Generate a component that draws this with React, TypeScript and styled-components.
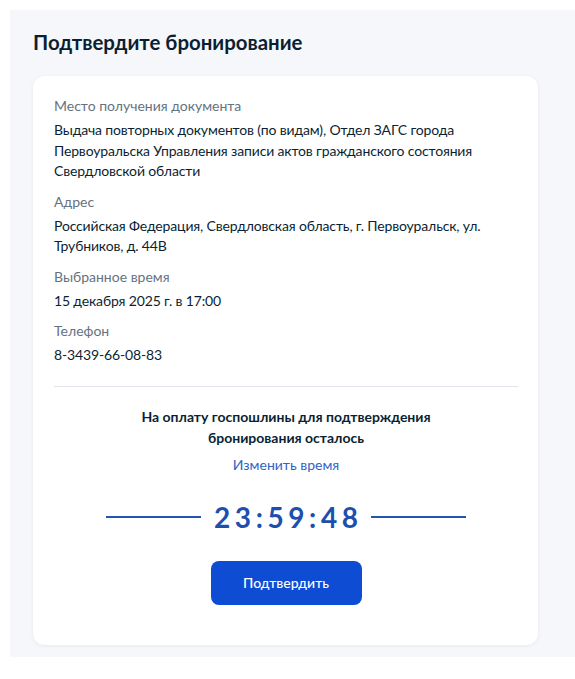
import React from "react";
import styled, { createGlobalStyle } from "styled-components";

const GlobalStyle = createGlobalStyle`
  body {
    margin: 0;
    background: #ffffff;
    font-family: Lato, "Noto Sans", sans-serif;
    color: #0b1f33;
    overflow: hidden;
  }
`;

type InfoItem = {
  label: string;
  value: string;
};

const items: InfoItem[] = [
  {
    label: "Место получения документа",
    value:
      "Выдача повторных документов (по видам), Отдел ЗАГС города Первоуральска Управления записи актов гражданского состояния Свердловской области",
  },
  {
    label: "Адрес",
    value: "Российская Федерация, Свердловская область, г. Первоуральск, ул. Трубников, д. 44В",
  },
  { label: "Выбранное время", value: "15 декабря 2025 г. в 17:00" },
  { label: "Телефон", value: "8-3439-66-08-83" },
];

const Panel = styled.section`
  margin: 10px 0 0 10px;
  padding: 18px 37px 12px 23px;
  background: #f5f7fa;
`;

const Title = styled.h1`
  margin: 0 0 20px;
  font-size: 20.4px;
  line-height: 28px;
  font-weight: 700;
  color: #0b1f33;
`;

const Card = styled.div`
  background: #ffffff;
  border-radius: 12px;
  padding: 20px 20px 40px 21px;
  box-shadow: 0 1px 4px rgba(11, 31, 51, 0.06);
`;

const InfoList = styled.dl`
  margin: 0;
  display: flex;
  flex-direction: column;
  gap: 10px;
`;

const InfoGroup = styled.div`
  display: flex;
  flex-direction: column;
  gap: 4px;
`;

const Label = styled.dt`
  font-size: 14px;
  line-height: 20px;
  color: #66727f;
`;

const Value = styled.dd`
  margin: 0;
  font-size: 14px;
  line-height: 20.5px;
  letter-spacing: -0.15px;
  color: #0b1f33;
`;

const Divider = styled.hr`
  margin: 20px 0 19px;
  border: none;
  height: 1px;
  background: #e1e5eb;
`;

const Timer = styled.div`
  display: flex;
  flex-direction: column;
  align-items: center;
`;

const Notice = styled.p`
  margin: 0;
  max-width: 300px;
  text-align: center;
  font-size: 14px;
  line-height: 21px;
  font-weight: 700;
  color: #0b1f33;
`;

const ChangeLink = styled.a`
  margin-top: 7px;
  font-size: 14px;
  line-height: 20px;
  color: #2f62c5;
  text-decoration: none;
  cursor: pointer;
`;

const CountdownRow = styled.div`
  margin-top: 26px;
  display: flex;
  align-items: center;
  gap: 13px;
`;

const Rule = styled.span`
  width: 95px;
  height: 2px;
  background: #2456b0;
`;

const Countdown = styled.span`
  margin-right: -4.6px;
  font-size: 28px;
  line-height: 32px;
  font-weight: 700;
  letter-spacing: 4.6px;
  color: #1c4fae;
`;

const ConfirmButton = styled.button`
  margin-top: 28px;
  width: 151px;
  height: 44px;
  border: none;
  border-radius: 8px;
  background: #0d4cd3;
  color: #ffffff;
  font-family: inherit;
  font-size: 14px;
  font-weight: 500;
  cursor: pointer;
`;

export default function App() {
  return (
    <>
      <GlobalStyle />
      <Panel>
        <Title>Подтвердите бронирование</Title>
        <Card>
          <InfoList>
            {items.map((item) => (
              <InfoGroup key={item.label}>
                <Label>{item.label}</Label>
                <Value>{item.value}</Value>
              </InfoGroup>
            ))}
          </InfoList>
          <Divider />
          <Timer>
            <Notice>На оплату госпошлины для подтверждения бронирования осталось</Notice>
            <ChangeLink>Изменить время</ChangeLink>
            <CountdownRow>
              <Rule />
              <Countdown>23:59:48</Countdown>
              <Rule />
            </CountdownRow>
            <ConfirmButton>Подтвердить</ConfirmButton>
          </Timer>
        </Card>
      </Panel>
    </>
  );
}
